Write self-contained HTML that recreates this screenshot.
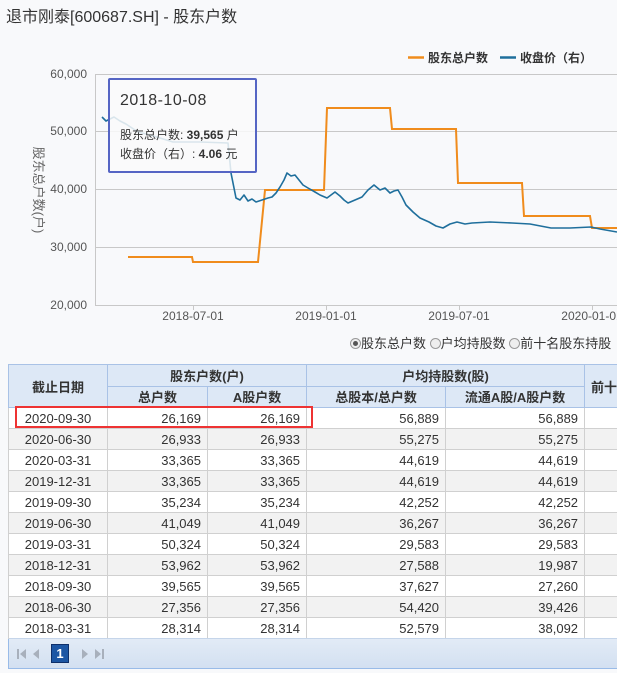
<!DOCTYPE html>
<html><head><meta charset="utf-8"><style>
*{margin:0;padding:0;box-sizing:border-box}
body{width:617px;height:673px;overflow:hidden;background:#f8f9fb;font-family:"Liberation Sans","Noto Sans CJK SC",sans-serif;color:#333;position:relative}
.title{position:absolute;left:6px;top:3px;font-size:16px;color:#333}
svg{position:absolute;left:0;top:0}
.tip{position:absolute;left:108px;top:78px;width:149px;height:95px;border:2px solid #5565c4;background:rgba(250,250,250,0.85);border-radius:2px}
.tip .d{position:absolute;left:10px;top:12px;font-size:16px;letter-spacing:0.5px}
.tip .l{position:absolute;left:10px;font-size:12px}
.radios{position:absolute;left:350px;top:333px;font-size:13px;white-space:nowrap}
.rb{display:inline-block;width:11px;height:11px;border:1px solid #999;border-radius:50%;background:#eee;vertical-align:-1px;position:relative}
.rb.on::after{content:"";position:absolute;left:2px;top:2px;width:5px;height:5px;border-radius:50%;background:#555}
table{position:absolute;left:8px;top:364px;width:626px;border-collapse:collapse;font-size:13px;table-layout:fixed}
td,th{border:1px solid #d0d0d0;height:21px;padding:0 6px;white-space:nowrap;overflow:hidden}
th{background:#dde8f6;border-color:#a9c2e6;font-weight:bold;font-size:13px;height:21.5px}
td{text-align:right;background:#fff}
td:first-child{text-align:center}
tr.e td{background:#f2f2f2}
.wrap{position:absolute;left:8px;top:364px;width:620px;height:305px;border:1px solid #99bbe8}
.pager{position:absolute;left:9px;top:638px;width:610px;height:30px;background:linear-gradient(#e2ebf6,#d3e0f1);border-top:1px solid #c5d5ea}
.pg{position:absolute;left:42px;top:5px;width:18px;height:19px;background:#1c56a4;border:1px solid #0e2f6a;color:#fff;font-weight:bold;font-size:13px;text-align:center;line-height:17px}
.red{position:absolute;left:15px;top:406px;width:298px;height:22px;border:2px solid #ee3333}
</style></head><body>
<div class="title">退市刚泰[600687.SH] - 股东户数</div>
<svg width="617" height="330">
<g stroke="#c8c8c8" stroke-width="1">
<line x1="95" y1="74.5" x2="617" y2="74.5"/><line x1="95" y1="131.5" x2="617" y2="131.5"/><line x1="95" y1="189.5" x2="617" y2="189.5"/><line x1="95" y1="247.5" x2="617" y2="247.5"/><line x1="95" y1="305.5" x2="617" y2="305.5"/>
<line x1="95.5" y1="74" x2="95.5" y2="305"/>
<line x1="193.5" y1="305" x2="193.5" y2="310"/><line x1="326.5" y1="305" x2="326.5" y2="310"/><line x1="459.5" y1="305" x2="459.5" y2="310"/><line x1="592.5" y1="305" x2="592.5" y2="310"/>
</g>
<g font-size="12" fill="#555" text-anchor="end" font-family="Liberation Sans">
<text x="87" y="78">60,000</text><text x="87" y="135">50,000</text><text x="87" y="193">40,000</text><text x="87" y="251">30,000</text><text x="87" y="309">20,000</text>
</g>
<g font-size="12" fill="#555" text-anchor="middle" font-family="Liberation Sans">
<text x="193" y="320">2018-07-01</text><text x="326" y="320">2019-01-01</text><text x="459" y="320">2019-07-01</text><text x="592" y="320">2020-01-01</text>
</g>
<text transform="translate(34,190) rotate(90)" font-size="13" fill="#666" text-anchor="middle">股东总户数(户)</text>
<line x1="408" y1="57.5" x2="424" y2="57.5" stroke="#f08c1c" stroke-width="2.5"/>
<text x="428" y="62" font-size="12" font-weight="bold" fill="#333">股东总户数</text>
<line x1="500" y1="57.5" x2="516" y2="57.5" stroke="#1f6f9c" stroke-width="2.5"/>
<text x="520" y="62" font-size="12" font-weight="bold" fill="#333">收盘价（右）</text>
<polyline fill="none" stroke="#f08c1c" stroke-width="2" points="128,257 192,257 193,262 258,262 265,190 324,190 327,108 390,108 392,129 456,129 458,183 522,183 524,216 590,216 592,228 617,228"/>
<polyline fill="none" stroke="#1f6f9c" stroke-width="1.6" stroke-linejoin="round" points="102,117 106,121 110,119 114,117 120,121 126,124 132,128 138,132 150,135 160,138 173,142 200,142 228,143 231,173 236,198 240,200 244,195 248,201 252,199 256,202 262,200 268,198 272,197 276,193 280,187 284,180 287,173 291,176 295,175 299,180 303,185 308,188 315,192 320,195 327,198 331,195 335,192 340,196 344,200 348,203 355,200 362,197 368,190 374,185 380,190 385,188 390,193 394,191 398,190 402,197 406,205 413,212 420,218 429,222 436,226 443,228 450,224 457,222 465,224 472,223 490,222 512,223 530,224 551,228 570,228 591,227 600,229 617,232"/>
</svg>
<div class="tip">
<div class="d">2018-10-08</div>
<div class="l" style="top:46px">股东总户数: <b>39,565</b> 户</div>
<div class="l" style="top:65px">收盘价（右）: <b>4.06</b> 元</div>
</div>
<div class="radios"><span class="rb on"></span>股东总户数 <span class="rb"></span>户均持股数 <span class="rb"></span>前十名股东持股</div>
<div class="wrap"></div>
<table>
<colgroup><col style="width:99px"><col style="width:100px"><col style="width:99px"><col style="width:139px"><col style="width:139px"><col style="width:50px"></colgroup>
<tr><th rowspan="2">截止日期</th><th colspan="2">股东户数(户)</th><th colspan="2">户均持股数(股)</th><th rowspan="2" style="text-align:left">前十</th></tr>
<tr><th>总户数</th><th>A股户数</th><th>总股本/总户数</th><th>流通A股/A股户数</th></tr>
<tr><td>2020-09-30</td><td>26,169</td><td>26,169</td><td>56,889</td><td>56,889</td><td></td></tr>
<tr class="e"><td>2020-06-30</td><td>26,933</td><td>26,933</td><td>55,275</td><td>55,275</td><td></td></tr>
<tr><td>2020-03-31</td><td>33,365</td><td>33,365</td><td>44,619</td><td>44,619</td><td></td></tr>
<tr class="e"><td>2019-12-31</td><td>33,365</td><td>33,365</td><td>44,619</td><td>44,619</td><td></td></tr>
<tr><td>2019-09-30</td><td>35,234</td><td>35,234</td><td>42,252</td><td>42,252</td><td></td></tr>
<tr class="e"><td>2019-06-30</td><td>41,049</td><td>41,049</td><td>36,267</td><td>36,267</td><td></td></tr>
<tr><td>2019-03-31</td><td>50,324</td><td>50,324</td><td>29,583</td><td>29,583</td><td></td></tr>
<tr class="e"><td>2018-12-31</td><td>53,962</td><td>53,962</td><td>27,588</td><td>19,987</td><td></td></tr>
<tr><td>2018-09-30</td><td>39,565</td><td>39,565</td><td>37,627</td><td>27,260</td><td></td></tr>
<tr class="e"><td>2018-06-30</td><td>27,356</td><td>27,356</td><td>54,420</td><td>39,426</td><td></td></tr>
<tr><td>2018-03-31</td><td>28,314</td><td>28,314</td><td>52,579</td><td>38,092</td><td></td></tr>
</table>
<div class="pager">
<svg width="100" height="30" style="position:absolute;left:0;top:0">
<g fill="#a8b0bc"><rect x="8" y="10" width="2" height="10"/><polygon points="17,10 11,15 17,20"/><polygon points="30,10 24,15 30,20"/><polygon points="73,10 79,15 73,20"/><polygon points="86,10 92,15 86,20"/><rect x="93" y="10" width="2" height="10"/></g>
</svg>
<div class="pg">1</div>
</div>
<div class="red"></div>
</body></html>
